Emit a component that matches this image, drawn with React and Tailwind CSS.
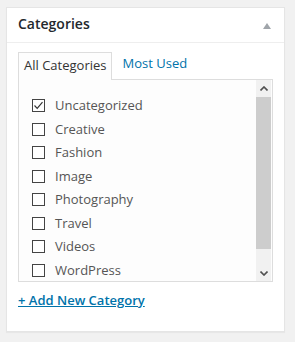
import React from 'react';

const items = [
    { name: 'Uncategorized', checked: true },
    { name: 'Creative' },
    { name: 'Fashion' },
    { name: 'Image' },
    { name: 'Photography' },
    { name: 'Travel' },
    { name: 'Videos' },
    { name: 'WordPress' },
];

function Checkbox({ checked }) {
    return (
        <span className="flex h-[13px] w-[13px] shrink-0 items-center justify-center border border-[#444] bg-white">
            {checked && (
                <svg width="11" height="11" viewBox="0 0 11 11" fill="none">
                    <path d="M1.5 5.5 L4.2 8.3 L9.5 2.2" stroke="#333" strokeWidth="1.2" />
                </svg>
            )}
        </span>
    );
}

export default function App() {
    return (
        <div className="min-h-[342px] bg-[#f1f1f1] pl-[6px] pt-[7px]" style={{ fontFamily: '"Open Sans", sans-serif' }}>
            <div className="w-[279px] border border-[#e5e5e5] bg-white shadow-[0_1px_1px_rgba(0,0,0,0.04)]">
                {/* header */}
                <div className="flex h-[35px] items-center justify-between border-b border-[#eeeeee] pl-[11px] pr-[13px]">
                    <h2 className="pb-[4px] text-[14px] font-semibold text-[#23282d]">Categories</h2>
                    <svg className="mt-[2px]" width="8" height="6" viewBox="0 0 8 6">
                        <path d="M0 6 L4 0 L8 6 Z" fill="#a0a5aa" />
                    </svg>
                </div>

                <div className="px-[11px] pt-[8px] pb-[21px]">
                    {/* tabs */}
                    <div className="flex items-end">
                        <div className="relative -mb-px flex h-[28px] items-center border border-b-0 border-[#dddddd] bg-[#fdfdfd] px-[5px] pb-[2px] text-[13px] text-[#333]">
                            All Categories
                        </div>
                        <div className="flex h-[28px] items-center px-[10px] pb-[2px] text-[13px] text-[#0073aa]">
                            Most Used
                        </div>
                    </div>

                    {/* list panel */}
                    <div className="flex h-[203px] border border-[#dddddd] bg-[#fdfdfd]">
                        <ul className="flex-1 pl-[13px] pt-[14px]">
                            {items.map((item) => (
                                <li key={item.name} className="flex h-[23.5px] items-center gap-[10px] text-[13px] text-[#555]">
                                    <Checkbox checked={item.checked} />
                                    <span>{item.name}</span>
                                </li>
                            ))}
                        </ul>
                        {/* scrollbar */}
                        <div className="mr-px flex w-[15px] flex-col bg-[#f1f1f1]">
                            <div className="flex h-[17px] items-center justify-center">
                                <svg width="8" height="5" viewBox="0 0 8 5">
                                    <path d="M0.5 4.5 L4 1 L7.5 4.5" stroke="#505050" strokeWidth="1.6" fill="none" />
                                </svg>
                            </div>
                            <div className="h-[152px] bg-[#cdcdcd]" />
                            <div className="flex flex-1 items-end justify-center pb-[5px]">
                                <svg width="8" height="5" viewBox="0 0 8 5">
                                    <path d="M0.5 0.5 L4 4 L7.5 0.5" stroke="#505050" strokeWidth="1.6" fill="none" />
                                </svg>
                            </div>
                        </div>
                    </div>

                    <a href="#" className="mt-[8px] block text-[13px] font-semibold leading-[20px] text-[#0073aa] underline">
                        + Add New Category
                    </a>
                </div>
            </div>
        </div>
    );
}
